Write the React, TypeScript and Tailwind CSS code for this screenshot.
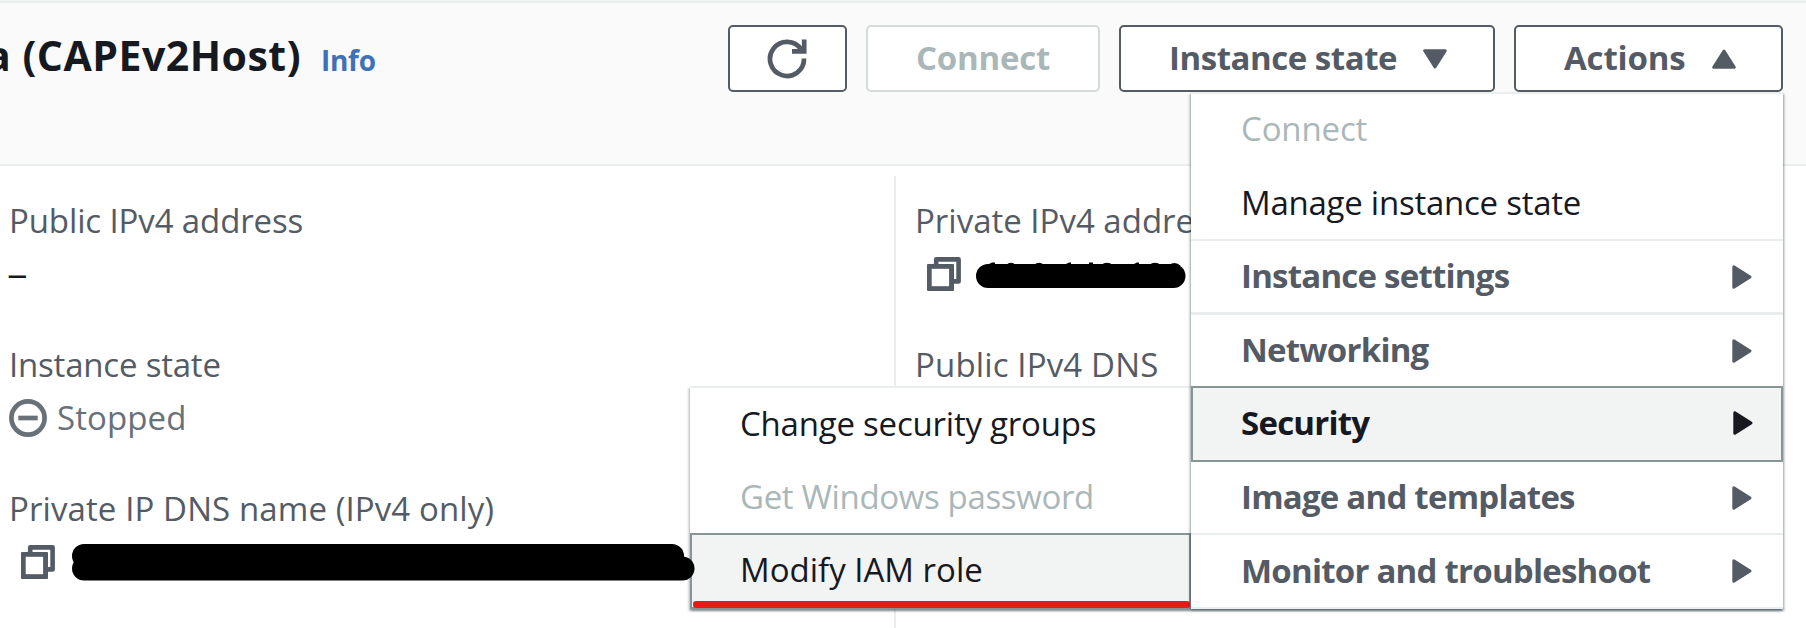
import type { ReactNode } from "react";

function CopyIcon() {
  return (
    <svg className="h-[34px] w-[34px] shrink-0" viewBox="0 0 34 34" fill="none" stroke="#545b64" strokeLinejoin="round">
      <path d="M9.2 8V2.4h22.4v22h-6" strokeWidth="4.6" />
      <rect x="0" y="7" width="27" height="27" rx="1" fill="#545b64" stroke="none" />
      <rect x="4.7" y="11.8" width="17.4" height="17.4" fill="#fff" stroke="none" />
    </svg>
  );
}

function RefreshIcon() {
  return (
    <svg className="mr-px h-10 w-10" viewBox="0 0 40 40" fill="none" stroke="#545b64" strokeWidth="4.7">
      <path d="M37 19.5A17 17 0 1 1 34.2 10.6" />
      <path d="M25 12.4H37.2V.5" />
    </svg>
  );
}

function Caret({ up = false }: { up?: boolean }) {
  return (
    <svg
      className={up ? "h-5 w-6 rotate-180" : "h-5 w-6"}
      viewBox="0 0 24 20"
      fill="#545b64"
      stroke="#545b64"
      strokeWidth="3"
      strokeLinejoin="round"
    >
      <path d="M1.7 1.8h20.6L12 17.9z" />
    </svg>
  );
}

function ArrowRight({ color }: { color: string }) {
  return (
    <svg className="h-6 w-5" viewBox="0 0 20 24" fill={color} stroke={color} strokeWidth="3" strokeLinejoin="round">
      <path d="M1.8 1.8v20.4L18 12z" />
    </svg>
  );
}

function MenuGroup({ label, row, active = false }: { label: string; row: string; active?: boolean }) {
  return (
    <div
      className={`flex items-center justify-between ${row} ${
        active
          ? "border-2 border-[#879596] bg-[#f2f3f3] pr-[28px] pb-[2px] pl-[48px] text-[#16191f]"
          : "border-[#eaeded] pr-[31px] pl-[50px] text-[#545b64]"
      }`}
    >
      <span className="pb-[2px] font-bold tracking-[-0.77px]">{label}</span>
      <ArrowRight color={active ? "#16191f" : "#545b64"} />
    </div>
  );
}

function Field({ label, tracking, children }: { label: string; tracking: string; children: ReactNode }) {
  return (
    <div className="mb-[38px]">
      <div className={`h-[53px] text-[#545b64] ${tracking}`}>{label}</div>
      <div className="flex h-[53px]">{children}</div>
    </div>
  );
}

export default function App() {
  return (
    <div className="relative flex h-[628px] w-[1806px] flex-col overflow-hidden bg-white font-['Open_Sans','Noto_Sans',sans-serif] text-[33px] leading-[53px] whitespace-nowrap">
      <header className="flex h-[166px] flex-col border-b-2 border-[#eaeded] bg-[#fafafa]">
        <div className="h-[3px] border-b-2 border-[#eaeded] bg-[#f2f3f3]" />
        <div className="flex items-start justify-between pt-[22px] pr-[23px]">
          <div className="-ml-[14px] flex items-baseline pt-[4px]">
            <h1 className="text-[41px] font-bold tracking-[0.5px] text-[#16191f]">a (CAPEv2Host)</h1>
            <a className="ml-[20px] text-[28px] font-bold tracking-[-0.3px] text-[#3f71b7]">Info</a>
          </div>
          <div className="flex gap-[19px] font-bold">
            <button className="flex h-[67px] w-[119px] items-center justify-center rounded-[5px] border-2 border-[#545b64] bg-white">
              <RefreshIcon />
            </button>
            <button className="flex h-[67px] w-[234px] items-center justify-center rounded-[5px] border-2 border-[#d5dbdb] bg-white pb-[2px] tracking-[-0.2px] text-[#aab7b8]">
              Connect
            </button>
            <button className="flex h-[67px] w-[376px] items-center justify-between rounded-[5px] border-2 border-[#545b64] bg-white pr-[46px] pl-[48px] text-[#545b64]">
              <span className="pb-[2px] tracking-[-0.46px]">Instance state</span>
              <Caret />
            </button>
            <button className="flex h-[67px] w-[269px] items-center justify-between rounded-[5px] border-2 border-[#545b64] bg-white pr-[45px] pl-[48px] text-[#545b64]">
              <span className="pb-[2px] tracking-[-0.15px]">Actions</span>
              <Caret up />
            </button>
          </div>
        </div>
      </header>

      <main className="flex flex-1 pt-[10px]">
        <section className="w-[894px] shrink-0 pt-[18px] pl-[9px]">
          <Field label="Public IPv4 address" tracking="tracking-[-0.12px]">
            <span className="-ml-[2px] origin-left scale-x-125 text-[#16191f]">–</span>
          </Field>
          <Field label="Instance state" tracking="tracking-[-0.2px]">
            <svg className="mt-[8px] h-[38px] w-[38px]" viewBox="0 0 38 38" fill="none" stroke="#687078" strokeWidth="4.7">
              <circle cx="19" cy="19" r="16.6" />
              <path d="M9.3 19h19.4" />
            </svg>
            <span className="ml-[10px] tracking-[0.1px] text-[#687078]">Stopped</span>
          </Field>
          <Field label="Private IP DNS name (IPv4 only)" tracking="tracking-[0.1px]">
            <div className="mt-[10px] ml-[12px] flex items-start">
              <CopyIcon />
              <svg className="relative z-20 -mt-px ml-[17px] h-[37px] w-[623px] shrink-0" viewBox="0 0 623 37">
                <rect x="0" y="0" width="612" height="24" rx="12" />
                <rect x="0" y="12.500" width="622.500" height="24" rx="12" />
                <rect x="4" y="8" width="600" height="20" />
              </svg>
            </div>
          </Field>
        </section>
        <section className="flex-1 border-l-2 border-[#eaeded] pt-[18px] pl-[19px]">
          <Field label="Private IPv4 addresses" tracking="tracking-normal">
            <div className="mt-[10px] ml-[12px] flex items-start">
              <CopyIcon />
              <svg className="mt-[4px] ml-[15px] h-[28px] w-[210px]" viewBox="0 0 210 28">
                <rect x="0" y="3" width="209.500" height="24" rx="12" />
                <path d="M11 4l5-2.400h3V4zM30 4q5-4.500 10 0zM58 4q5-4.500 10 0zM88 4l5-2.400h2V4zM113 1.600h4V4h-4zM125 4q6-4.500 12 0zM156 4l5-2.400h2V4zM173 4q6-4.500 12 0zM193 4q6-4.500 12 1z" />
              </svg>
            </div>
          </Field>
          <Field label="Public IPv4 DNS" tracking="tracking-[0.15px]">
            <span />
          </Field>
        </section>
      </main>

      <div className="absolute top-[386px] left-[690px] z-[5] flex w-[501px] flex-col border-t-2 border-[#eaeded] bg-white text-[#16191f] shadow-[0_2px_2px_rgba(0,28,36,0.3),2px_2px_2px_rgba(0,28,36,0.15),-2px_2px_2px_rgba(0,28,36,0.15)]">
        <div className="flex h-[73px] items-center pb-[3px] pl-[50px] tracking-[-0.22px]">Change security groups</div>
        <div className="flex h-[72px] items-center pb-[2px] pl-[50px] tracking-[-0.35px] text-[#aab7b8]">Get Windows password</div>
        <div className="relative flex h-[76px] items-center border-2 border-[#879596] bg-[#f2f3f3] pb-[3px] pl-[48px]">
          Modify IAM role
          <div className="absolute -right-[1px] bottom-[-1px] left-px h-[7px] rounded-[3px] bg-[#e81b1b]" />
        </div>
      </div>

      <div className="absolute top-[92px] left-[1191px] z-10 flex w-[592px] flex-col border-y-2 border-[#eaeded] bg-white text-[#16191f] shadow-[0_2px_2px_rgba(0,28,36,0.5),2px_2px_2px_rgba(0,28,36,0.15),-2px_2px_2px_rgba(0,28,36,0.15)]">
        <div className="flex h-[72px] items-center pb-[4px] pl-[50px] tracking-[-0.15px] text-[#aab7b8]">Connect</div>
        <div className="flex h-[75px] items-center border-b-2 border-[#eaeded] pl-[50px] tracking-[-0.25px]">Manage instance state</div>
        <MenuGroup label="Instance settings" row="h-[74px] border-b-3" />
        <MenuGroup label="Networking" row="h-[71px]" />
        <MenuGroup label="Security" row="h-[76px]" active />
        <MenuGroup label="Image and templates" row="h-[73px] border-b-2" />
        <MenuGroup label="Monitor and troubleshoot" row="h-[72px]" />
      </div>
    </div>
  );
}
